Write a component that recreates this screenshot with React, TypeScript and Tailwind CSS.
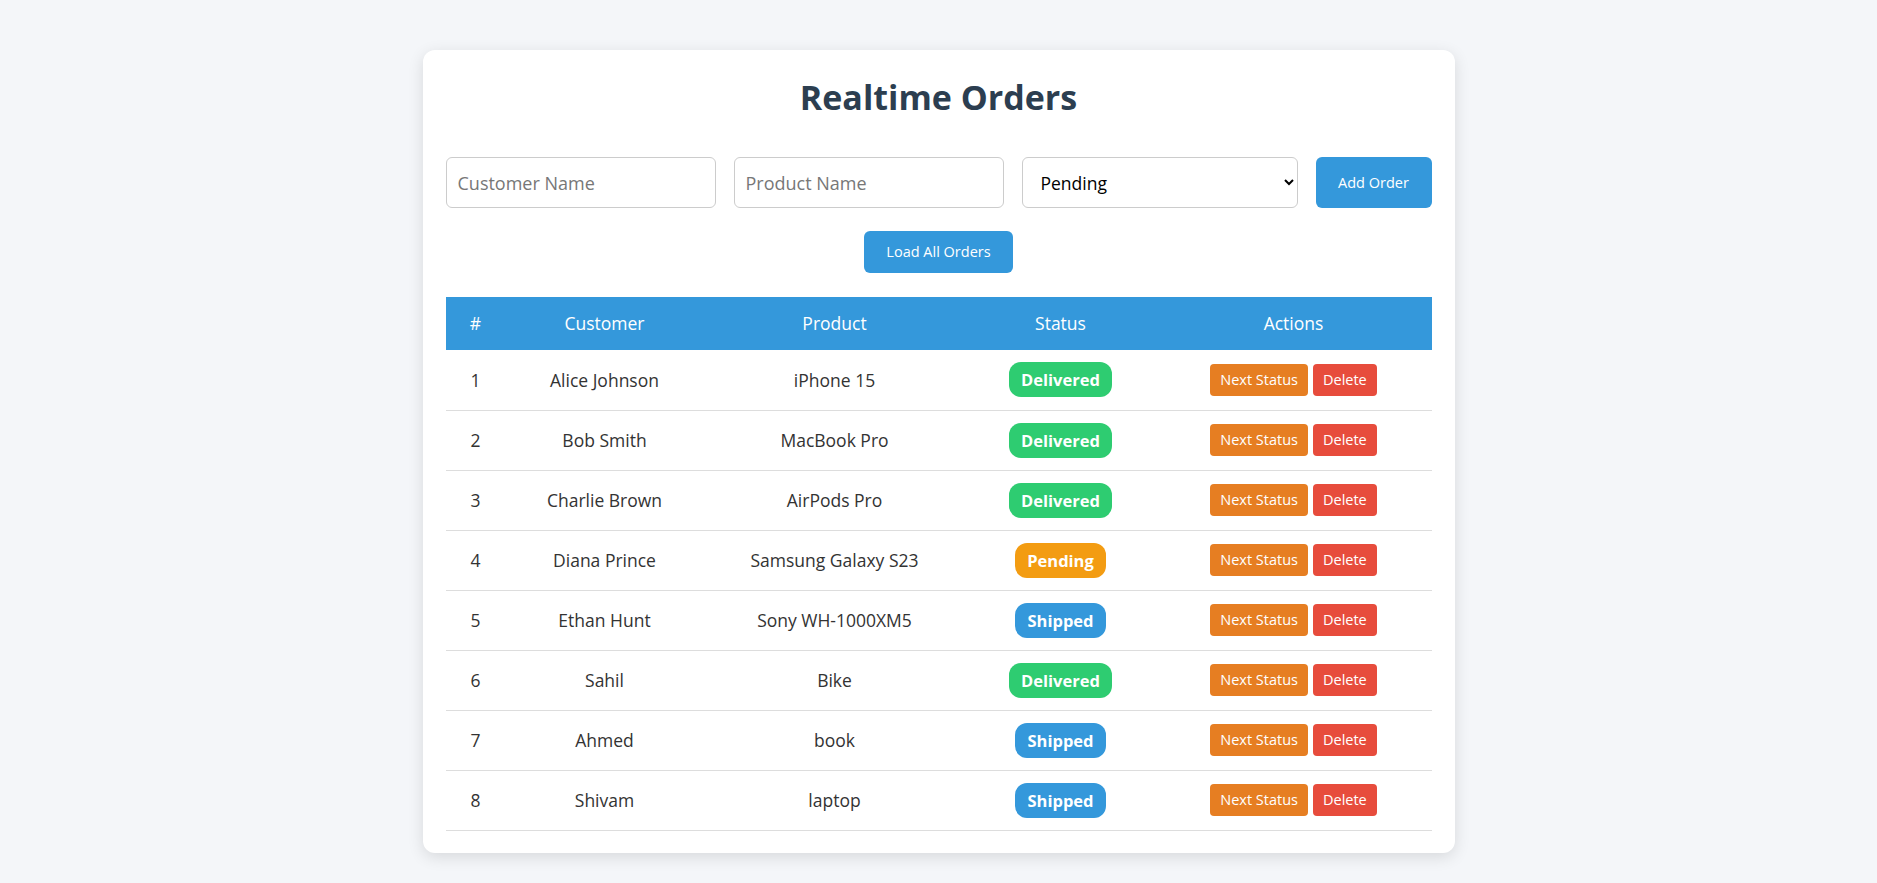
import { useState } from "react";

type Status = "Pending" | "Shipped" | "Delivered";

interface Order {
  id: number;
  customer: string;
  product: string;
  status: Status;
}

const initialOrders: Order[] = [
  { id: 1, customer: "Alice Johnson", product: "iPhone 15", status: "Delivered" },
  { id: 2, customer: "Bob Smith", product: "MacBook Pro", status: "Delivered" },
  { id: 3, customer: "Charlie Brown", product: "AirPods Pro", status: "Delivered" },
  { id: 4, customer: "Diana Prince", product: "Samsung Galaxy S23", status: "Pending" },
  { id: 5, customer: "Ethan Hunt", product: "Sony WH-1000XM5", status: "Shipped" },
  { id: 6, customer: "Sahil", product: "Bike", status: "Delivered" },
  { id: 7, customer: "Ahmed", product: "book", status: "Shipped" },
  { id: 8, customer: "Shivam", product: "laptop", status: "Shipped" },
];

const badgeColor: Record<Status, string> = {
  Pending: "bg-[#f39c12]",
  Shipped: "bg-[#3498db]",
  Delivered: "bg-[#2ecc71]",
};

const nextOf: Record<Status, Status> = {
  Pending: "Shipped",
  Shipped: "Delivered",
  Delivered: "Delivered",
};

const App = () => {
  const [orders, setOrders] = useState<Order[]>(initialOrders);
  const [customer, setCustomer] = useState("");
  const [product, setProduct] = useState("");
  const [status, setStatus] = useState<Status>("Pending");

  const addOrder = () => {
    if (!customer || !product) return;
    setOrders([
      ...orders,
      { id: orders.length + 1, customer, product, status },
    ]);
    setCustomer("");
    setProduct("");
  };

  const nextStatus = (id: number) => {
    setOrders(
      orders.map((o) => (o.id === id ? { ...o, status: nextOf[o.status] } : o))
    );
  };

  const deleteOrder = (id: number) => {
    setOrders(orders.filter((o) => o.id !== id));
  };

  return (
    <div className="min-h-screen w-full bg-[#f4f6f9] pt-[50px] pb-[20px] font-['Segoe_UI','Open_Sans',sans-serif] text-[#333]">
      <div className="mx-auto w-[1032px] rounded-[12px] bg-white px-[23px] pt-6 pb-[22px] shadow-[0_4px_16px_rgba(0,0,0,0.12)]">
        <h1 className="mt-[2px] mb-[38px] text-center text-[34px] leading-[43px] font-bold text-[#2c3e50]">
          Realtime Orders
        </h1>

        {/* formulario */}
        <div className="flex gap-[18px]">
          <input
            value={customer}
            onChange={(e) => setCustomer(e.target.value)}
            placeholder="Customer Name"
            className="h-[51px] min-w-0 flex-1 rounded-[6px] border border-[#ccc] px-[11px] text-[18px] outline-none placeholder:text-[#777]"
          />
          <input
            value={product}
            onChange={(e) => setProduct(e.target.value)}
            placeholder="Product Name"
            className="h-[51px] min-w-0 flex-1 rounded-[6px] border border-[#ccc] px-[11px] text-[18px] outline-none placeholder:text-[#777]"
          />
          <select
            value={status}
            onChange={(e) => setStatus(e.target.value as Status)}
            className="h-[51px] min-w-0 flex-1 rounded-[6px] border border-[#ccc] bg-white px-[14px] text-[17.5px] text-black outline-none"
          >
            <option>Pending</option>
            <option>Shipped</option>
            <option>Delivered</option>
          </select>
          <button
            onClick={addOrder}
            className="h-[51px] w-[116px] shrink-0 rounded-[6px] bg-[#3498db] text-[14.5px] text-white"
          >
            Add Order
          </button>
        </div>

        <div className="mt-[23px] mb-[24px] flex justify-center">
          <button className="h-[42px] w-[149px] rounded-[6px] bg-[#3498db] text-[14.5px] text-white">
            Load All Orders
          </button>
        </div>

        <table className="w-full table-fixed border-collapse text-center text-[17.5px]">
          <thead>
            <tr className="h-[53px] bg-[#3498db] text-white">
              <th className="w-[60px] font-normal">#</th>
              <th className="w-[198px] font-normal">Customer</th>
              <th className="w-[262px] font-normal">Product</th>
              <th className="w-[190px] font-normal">Status</th>
              <th className="font-normal">Actions</th>
            </tr>
          </thead>
          <tbody>
            {orders.map((o, index) => (
              <tr key={o.id} className="h-[60px] border-b border-[#ddd]">
                <td>{index + 1}</td>
                <td>{o.customer}</td>
                <td>{o.product}</td>
                <td>
                  <span
                    className={`inline-block rounded-[12px] px-[12px] py-[6px] text-[16.5px] leading-[23px] font-bold text-white ${badgeColor[o.status]}`}
                  >
                    {o.status}
                  </span>
                </td>
                <td>
                  <div className="flex justify-center gap-[5px]">
                    <button
                      onClick={() => nextStatus(o.id)}
                      className="h-[32px] rounded-[4px] bg-[#e67e22] px-[10px] text-[14.5px] text-white"
                    >
                      Next Status
                    </button>
                    <button
                      onClick={() => deleteOrder(o.id)}
                      className="h-[32px] rounded-[4px] bg-[#e74c3c] px-[10px] text-[14.5px] text-white"
                    >
                      Delete
                    </button>
                  </div>
                </td>
              </tr>
            ))}
          </tbody>
        </table>
      </div>
    </div>
  );
};

export default App;
